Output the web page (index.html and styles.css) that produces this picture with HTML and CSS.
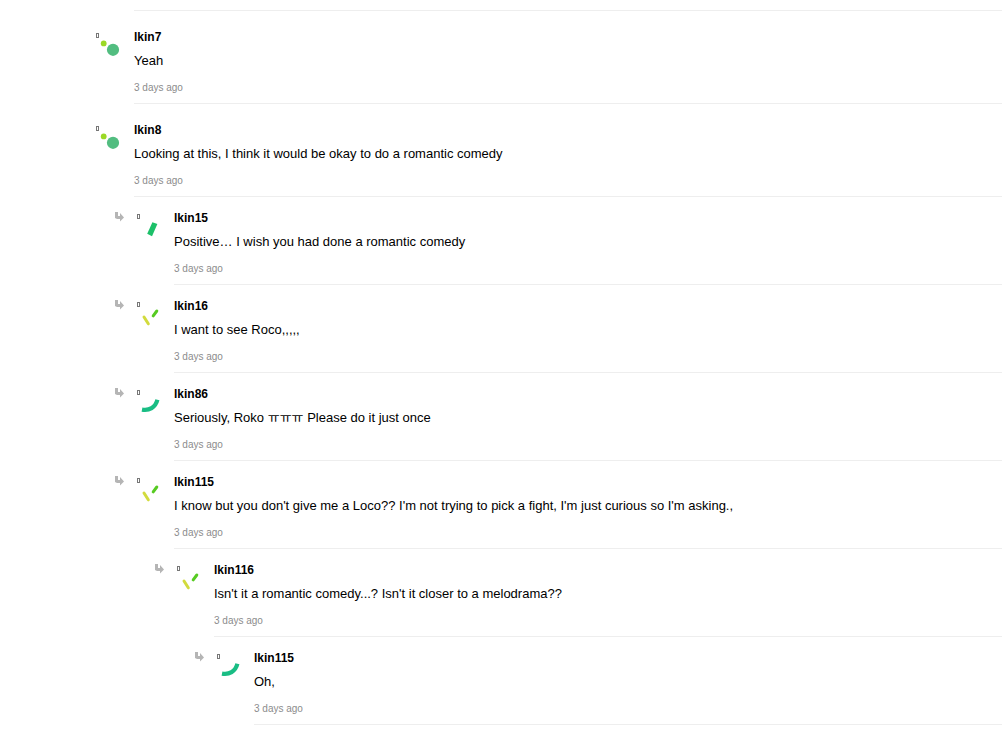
FILE: index.html
```
<!DOCTYPE html>
<html lang="en">
<head>
    <meta charset="UTF-8">
    <meta name="viewport" content="width=device-width, initial-scale=1.0">
    <title>Comments</title>
    <link rel="stylesheet" href="styles.css">
</head>
<body>
    <!-- shared icons -->
    <svg class="sprite" aria-hidden="true">
        <symbol id="arrow" viewBox="0 0 20 20">
            <path d="M1 3h3v4h2V4l4 4.4-4 4V10H3L1 9z" fill="#b5b5b5"/>
        </symbol>
        <symbol id="dots" viewBox="0 0 40 40">
            <rect x="2.5" y="5.5" width="2" height="4" fill="none" stroke="#777"/>
            <circle cx="9.7" cy="15.4" r="2.9" fill="#9bd926"/>
            <circle cx="19" cy="21.8" r="6.1" fill="#52bd80"/>
        </symbol>
        <symbol id="bar" viewBox="0 0 40 40">
            <rect x="3.5" y="5.5" width="2" height="4" fill="none" stroke="#777"/>
            <path d="M18.4 13.2l5 1.8-5.4 12.2-4.8-2.4z" fill="#1cc069"/>
        </symbol>
        <symbol id="check" viewBox="0 0 40 40">
            <rect x="3.5" y="5.5" width="2" height="4" fill="none" stroke="#777"/>
            <path d="M10 20l4.3 6.8" fill="none" stroke="#d2db3d" stroke-width="3" stroke-linecap="round"/>
            <path d="M19.2 18.8l3.6-4.8" fill="none" stroke="#57cb22" stroke-width="3" stroke-linecap="round"/>
        </symbol>
        <symbol id="arc" viewBox="0 0 40 40">
            <rect x="3.5" y="5.5" width="2" height="4" fill="none" stroke="#777"/>
            <path d="M8 24.6C15 26 21.5 22.5 23.4 14.8" fill="none" stroke="#19bd84" stroke-width="4.2"/>
        </symbol>
    </svg>

    <hr class="divider">
    <ul class="comments">
        <li>
            <article class="comment">
                <svg class="avatar"><use href="#dots"/></svg>
                <div class="content">
                    <h3 class="name">lkin7</h3>
                    <p class="text">Yeah</p>
                    <time class="date">3 days ago</time>
                </div>
            </article>
        </li>
        <li>
            <article class="comment">
                <svg class="avatar"><use href="#dots"/></svg>
                <div class="content">
                    <h3 class="name">lkin8</h3>
                    <p class="text">Looking at this, I think it would be okay to do a romantic comedy</p>
                    <time class="date">3 days ago</time>
                </div>
            </article>
            <ul class="replies">
                <li>
                    <article class="comment">
                        <svg class="arrow"><use href="#arrow"/></svg>
                        <svg class="avatar"><use href="#bar"/></svg>
                        <div class="content">
                            <h3 class="name">lkin15</h3>
                            <p class="text">Positive… I wish you had done a romantic comedy</p>
                            <time class="date">3 days ago</time>
                        </div>
                    </article>
                </li>
                <li>
                    <article class="comment">
                        <svg class="arrow"><use href="#arrow"/></svg>
                        <svg class="avatar"><use href="#check"/></svg>
                        <div class="content">
                            <h3 class="name">lkin16</h3>
                            <p class="text">I want to see Roco,,,,,</p>
                            <time class="date">3 days ago</time>
                        </div>
                    </article>
                </li>
                <li>
                    <article class="comment">
                        <svg class="arrow"><use href="#arrow"/></svg>
                        <svg class="avatar"><use href="#arc"/></svg>
                        <div class="content">
                            <h3 class="name">lkin86</h3>
                            <p class="text">Seriously, Roko ㅠㅠㅠ Please do it just once</p>
                            <time class="date">3 days ago</time>
                        </div>
                    </article>
                </li>
                <li>
                    <article class="comment">
                        <svg class="arrow"><use href="#arrow"/></svg>
                        <svg class="avatar"><use href="#check"/></svg>
                        <div class="content">
                            <h3 class="name">lkin115</h3>
                            <p class="text">I know but you don't give me a Loco?? I'm not trying to pick a fight, I'm just curious so I'm asking.,</p>
                            <time class="date">3 days ago</time>
                        </div>
                    </article>
                    <ul class="replies">
                        <li>
                            <article class="comment">
                                <svg class="arrow"><use href="#arrow"/></svg>
                                <svg class="avatar"><use href="#check"/></svg>
                                <div class="content">
                                    <h3 class="name">lkin116</h3>
                                    <p class="text">Isn't it a romantic comedy...? Isn't it closer to a melodrama??</p>
                                    <time class="date">3 days ago</time>
                                </div>
                            </article>
                            <ul class="replies">
                                <li>
                                    <article class="comment">
                                        <svg class="arrow"><use href="#arrow"/></svg>
                                        <svg class="avatar"><use href="#arc"/></svg>
                                        <div class="content">
                                            <h3 class="name">lkin115</h3>
                                            <p class="text">Oh,</p>
                                            <time class="date">3 days ago</time>
                                        </div>
                                    </article>
                                </li>
                            </ul>
                        </li>
                    </ul>
                </li>
            </ul>
        </li>
    </ul>
</body>
</html>
```
FILE: styles.css
```
body {
    font-family: "Liberation Sans", Arial, "Noto Sans CJK KR", sans-serif;
    margin: 0;
    padding: 10px 0 0 94px;
    background: #fff;
    color: #000;
}

ul {
    list-style: none;
    margin: 0;
    padding: 0;
}

.sprite {
    display: none;
}

.divider {
    margin: 0 0 0 40px;
    border: 0;
    border-top: 1px solid #eee;
}

.comment {
    display: flex;
    align-items: flex-start;
    padding-top: 17px;
}

/* each reply level moves one avatar to the right */
.replies {
    margin-left: 20px;
}

.replies .replies {
    margin-left: 40px;
}

.replies .comment {
    padding-top: 12px;
}

.arrow {
    flex: none;
    width: 20px;
    height: 20px;
}

.avatar {
    flex: none;
    width: 40px;
    height: 40px;
}

.content {
    flex: 1;
    padding-bottom: 8px;
    border-bottom: 1px solid #eee;
}

.name {
    margin: 0 0 5px;
    font-size: 12px;
    line-height: 18px;
    font-weight: bold;
}

.text {
    margin: 0 0 10px;
    font-size: 13px;
    line-height: 20px;
}

.date {
    display: block;
    font-size: 10px;
    line-height: 14px;
    color: #8c8c8c;
}
```
